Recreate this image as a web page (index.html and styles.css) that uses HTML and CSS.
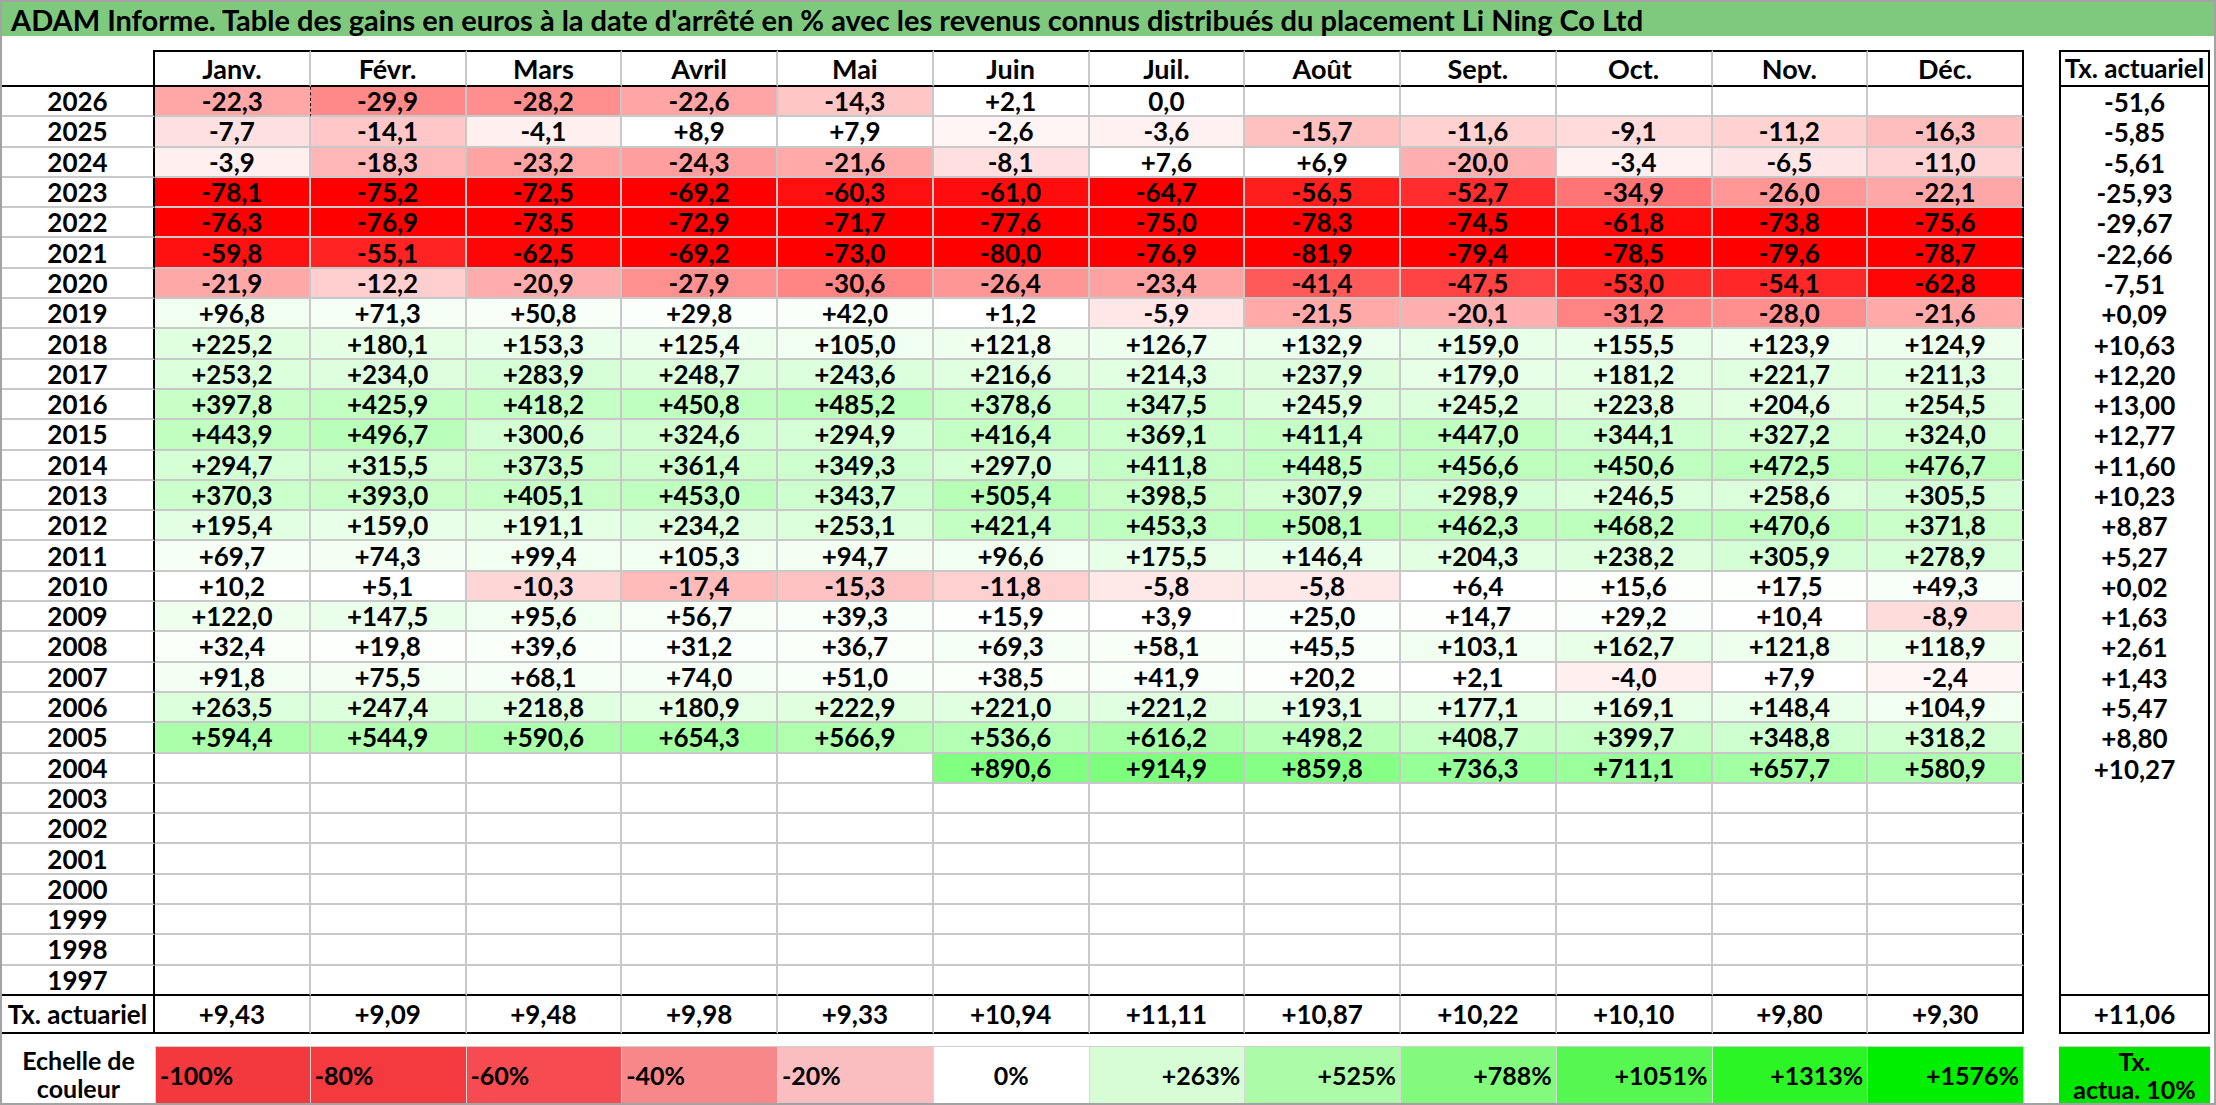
FILE: index.html
```html
<!DOCTYPE html>
<html lang="fr">
<head>
<meta charset="utf-8">
<title>ADAM Informe - Li Ning Co Ltd</title>
<link rel="stylesheet" href="styles.css">
</head>
<body>
<div class="sheet">
  <div class="title">ADAM Informe. Table des gains en euros à la date d'arrêté en % avec les revenus connus distribués du placement Li Ning Co Ltd</div>
  <div class="grid">
    <div class="row hdr"><div class="y"></div><div class="m">Janv.</div><div class="m">Févr.</div><div class="m">Mars</div><div class="m">Avril</div><div class="m">Mai</div><div class="m">Juin</div><div class="m">Juil.</div><div class="m">Août</div><div class="m">Sept.</div><div class="m">Oct.</div><div class="m">Nov.</div><div class="m">Déc.</div><div class="g"></div><div class="t">Tx. actuariel</div></div>
    <div class="row"><div class="y">2026</div><div class="c dash">-22,3</div><div class="c">-29,9</div><div class="c">-28,2</div><div class="c">-22,6</div><div class="c">-14,3</div><div class="c">+2,1</div><div class="c">0,0</div><div class="c"></div><div class="c"></div><div class="c"></div><div class="c"></div><div class="c"></div><div class="g"></div><div class="t">-51,6</div></div>
    <div class="row"><div class="y">2025</div><div class="c">-7,7</div><div class="c">-14,1</div><div class="c">-4,1</div><div class="c">+8,9</div><div class="c">+7,9</div><div class="c">-2,6</div><div class="c">-3,6</div><div class="c">-15,7</div><div class="c">-11,6</div><div class="c">-9,1</div><div class="c">-11,2</div><div class="c">-16,3</div><div class="g"></div><div class="t">-5,85</div></div>
    <div class="row"><div class="y">2024</div><div class="c">-3,9</div><div class="c">-18,3</div><div class="c">-23,2</div><div class="c">-24,3</div><div class="c">-21,6</div><div class="c">-8,1</div><div class="c">+7,6</div><div class="c">+6,9</div><div class="c">-20,0</div><div class="c">-3,4</div><div class="c">-6,5</div><div class="c">-11,0</div><div class="g"></div><div class="t">-5,61</div></div>
    <div class="row"><div class="y">2023</div><div class="c">-78,1</div><div class="c">-75,2</div><div class="c">-72,5</div><div class="c">-69,2</div><div class="c">-60,3</div><div class="c">-61,0</div><div class="c">-64,7</div><div class="c">-56,5</div><div class="c">-52,7</div><div class="c">-34,9</div><div class="c">-26,0</div><div class="c">-22,1</div><div class="g"></div><div class="t">-25,93</div></div>
    <div class="row"><div class="y">2022</div><div class="c">-76,3</div><div class="c">-76,9</div><div class="c">-73,5</div><div class="c">-72,9</div><div class="c">-71,7</div><div class="c">-77,6</div><div class="c">-75,0</div><div class="c">-78,3</div><div class="c">-74,5</div><div class="c">-61,8</div><div class="c">-73,8</div><div class="c">-75,6</div><div class="g"></div><div class="t">-29,67</div></div>
    <div class="row"><div class="y">2021</div><div class="c">-59,8</div><div class="c">-55,1</div><div class="c">-62,5</div><div class="c">-69,2</div><div class="c">-73,0</div><div class="c">-80,0</div><div class="c">-76,9</div><div class="c">-81,9</div><div class="c">-79,4</div><div class="c">-78,5</div><div class="c">-79,6</div><div class="c">-78,7</div><div class="g"></div><div class="t">-22,66</div></div>
    <div class="row"><div class="y">2020</div><div class="c">-21,9</div><div class="c">-12,2</div><div class="c">-20,9</div><div class="c">-27,9</div><div class="c">-30,6</div><div class="c">-26,4</div><div class="c">-23,4</div><div class="c">-41,4</div><div class="c">-47,5</div><div class="c">-53,0</div><div class="c">-54,1</div><div class="c">-62,8</div><div class="g"></div><div class="t">-7,51</div></div>
    <div class="row"><div class="y">2019</div><div class="c">+96,8</div><div class="c">+71,3</div><div class="c">+50,8</div><div class="c">+29,8</div><div class="c">+42,0</div><div class="c">+1,2</div><div class="c">-5,9</div><div class="c">-21,5</div><div class="c">-20,1</div><div class="c">-31,2</div><div class="c">-28,0</div><div class="c">-21,6</div><div class="g"></div><div class="t">+0,09</div></div>
    <div class="row"><div class="y">2018</div><div class="c">+225,2</div><div class="c">+180,1</div><div class="c">+153,3</div><div class="c">+125,4</div><div class="c">+105,0</div><div class="c">+121,8</div><div class="c">+126,7</div><div class="c">+132,9</div><div class="c">+159,0</div><div class="c">+155,5</div><div class="c">+123,9</div><div class="c">+124,9</div><div class="g"></div><div class="t">+10,63</div></div>
    <div class="row"><div class="y">2017</div><div class="c">+253,2</div><div class="c">+234,0</div><div class="c">+283,9</div><div class="c">+248,7</div><div class="c">+243,6</div><div class="c">+216,6</div><div class="c">+214,3</div><div class="c">+237,9</div><div class="c">+179,0</div><div class="c">+181,2</div><div class="c">+221,7</div><div class="c">+211,3</div><div class="g"></div><div class="t">+12,20</div></div>
    <div class="row"><div class="y">2016</div><div class="c">+397,8</div><div class="c">+425,9</div><div class="c">+418,2</div><div class="c">+450,8</div><div class="c">+485,2</div><div class="c">+378,6</div><div class="c">+347,5</div><div class="c">+245,9</div><div class="c">+245,2</div><div class="c">+223,8</div><div class="c">+204,6</div><div class="c">+254,5</div><div class="g"></div><div class="t">+13,00</div></div>
    <div class="row"><div class="y">2015</div><div class="c">+443,9</div><div class="c">+496,7</div><div class="c">+300,6</div><div class="c">+324,6</div><div class="c">+294,9</div><div class="c">+416,4</div><div class="c">+369,1</div><div class="c">+411,4</div><div class="c">+447,0</div><div class="c">+344,1</div><div class="c">+327,2</div><div class="c">+324,0</div><div class="g"></div><div class="t">+12,77</div></div>
    <div class="row"><div class="y">2014</div><div class="c">+294,7</div><div class="c">+315,5</div><div class="c">+373,5</div><div class="c">+361,4</div><div class="c">+349,3</div><div class="c">+297,0</div><div class="c">+411,8</div><div class="c">+448,5</div><div class="c">+456,6</div><div class="c">+450,6</div><div class="c">+472,5</div><div class="c">+476,7</div><div class="g"></div><div class="t">+11,60</div></div>
    <div class="row"><div class="y">2013</div><div class="c">+370,3</div><div class="c">+393,0</div><div class="c">+405,1</div><div class="c">+453,0</div><div class="c">+343,7</div><div class="c">+505,4</div><div class="c">+398,5</div><div class="c">+307,9</div><div class="c">+298,9</div><div class="c">+246,5</div><div class="c">+258,6</div><div class="c">+305,5</div><div class="g"></div><div class="t">+10,23</div></div>
    <div class="row"><div class="y">2012</div><div class="c">+195,4</div><div class="c">+159,0</div><div class="c">+191,1</div><div class="c">+234,2</div><div class="c">+253,1</div><div class="c">+421,4</div><div class="c">+453,3</div><div class="c">+508,1</div><div class="c">+462,3</div><div class="c">+468,2</div><div class="c">+470,6</div><div class="c">+371,8</div><div class="g"></div><div class="t">+8,87</div></div>
    <div class="row"><div class="y">2011</div><div class="c">+69,7</div><div class="c">+74,3</div><div class="c">+99,4</div><div class="c">+105,3</div><div class="c">+94,7</div><div class="c">+96,6</div><div class="c">+175,5</div><div class="c">+146,4</div><div class="c">+204,3</div><div class="c">+238,2</div><div class="c">+305,9</div><div class="c">+278,9</div><div class="g"></div><div class="t">+5,27</div></div>
    <div class="row"><div class="y">2010</div><div class="c">+10,2</div><div class="c">+5,1</div><div class="c">-10,3</div><div class="c">-17,4</div><div class="c">-15,3</div><div class="c">-11,8</div><div class="c">-5,8</div><div class="c">-5,8</div><div class="c">+6,4</div><div class="c">+15,6</div><div class="c">+17,5</div><div class="c">+49,3</div><div class="g"></div><div class="t">+0,02</div></div>
    <div class="row"><div class="y">2009</div><div class="c">+122,0</div><div class="c">+147,5</div><div class="c">+95,6</div><div class="c">+56,7</div><div class="c">+39,3</div><div class="c">+15,9</div><div class="c">+3,9</div><div class="c">+25,0</div><div class="c">+14,7</div><div class="c">+29,2</div><div class="c">+10,4</div><div class="c">-8,9</div><div class="g"></div><div class="t">+1,63</div></div>
    <div class="row"><div class="y">2008</div><div class="c">+32,4</div><div class="c">+19,8</div><div class="c">+39,6</div><div class="c">+31,2</div><div class="c">+36,7</div><div class="c">+69,3</div><div class="c">+58,1</div><div class="c">+45,5</div><div class="c">+103,1</div><div class="c">+162,7</div><div class="c">+121,8</div><div class="c">+118,9</div><div class="g"></div><div class="t">+2,61</div></div>
    <div class="row"><div class="y">2007</div><div class="c">+91,8</div><div class="c">+75,5</div><div class="c">+68,1</div><div class="c">+74,0</div><div class="c">+51,0</div><div class="c">+38,5</div><div class="c">+41,9</div><div class="c">+20,2</div><div class="c">+2,1</div><div class="c">-4,0</div><div class="c">+7,9</div><div class="c">-2,4</div><div class="g"></div><div class="t">+1,43</div></div>
    <div class="row"><div class="y">2006</div><div class="c">+263,5</div><div class="c">+247,4</div><div class="c">+218,8</div><div class="c">+180,9</div><div class="c">+222,9</div><div class="c">+221,0</div><div class="c">+221,2</div><div class="c">+193,1</div><div class="c">+177,1</div><div class="c">+169,1</div><div class="c">+148,4</div><div class="c">+104,9</div><div class="g"></div><div class="t">+5,47</div></div>
    <div class="row"><div class="y">2005</div><div class="c">+594,4</div><div class="c">+544,9</div><div class="c">+590,6</div><div class="c">+654,3</div><div class="c">+566,9</div><div class="c">+536,6</div><div class="c">+616,2</div><div class="c">+498,2</div><div class="c">+408,7</div><div class="c">+399,7</div><div class="c">+348,8</div><div class="c">+318,2</div><div class="g"></div><div class="t">+8,80</div></div>
    <div class="row"><div class="y">2004</div><div class="c"></div><div class="c"></div><div class="c"></div><div class="c"></div><div class="c"></div><div class="c">+890,6</div><div class="c">+914,9</div><div class="c">+859,8</div><div class="c">+736,3</div><div class="c">+711,1</div><div class="c">+657,7</div><div class="c">+580,9</div><div class="g"></div><div class="t">+10,27</div></div>
    <div class="row"><div class="y">2003</div><div class="c"></div><div class="c"></div><div class="c"></div><div class="c"></div><div class="c"></div><div class="c"></div><div class="c"></div><div class="c"></div><div class="c"></div><div class="c"></div><div class="c"></div><div class="c"></div><div class="g"></div><div class="t"></div></div>
    <div class="row"><div class="y">2002</div><div class="c"></div><div class="c"></div><div class="c"></div><div class="c"></div><div class="c"></div><div class="c"></div><div class="c"></div><div class="c"></div><div class="c"></div><div class="c"></div><div class="c"></div><div class="c"></div><div class="g"></div><div class="t"></div></div>
    <div class="row"><div class="y">2001</div><div class="c"></div><div class="c"></div><div class="c"></div><div class="c"></div><div class="c"></div><div class="c"></div><div class="c"></div><div class="c"></div><div class="c"></div><div class="c"></div><div class="c"></div><div class="c"></div><div class="g"></div><div class="t"></div></div>
    <div class="row"><div class="y">2000</div><div class="c"></div><div class="c"></div><div class="c"></div><div class="c"></div><div class="c"></div><div class="c"></div><div class="c"></div><div class="c"></div><div class="c"></div><div class="c"></div><div class="c"></div><div class="c"></div><div class="g"></div><div class="t"></div></div>
    <div class="row"><div class="y">1999</div><div class="c"></div><div class="c"></div><div class="c"></div><div class="c"></div><div class="c"></div><div class="c"></div><div class="c"></div><div class="c"></div><div class="c"></div><div class="c"></div><div class="c"></div><div class="c"></div><div class="g"></div><div class="t"></div></div>
    <div class="row"><div class="y">1998</div><div class="c"></div><div class="c"></div><div class="c"></div><div class="c"></div><div class="c"></div><div class="c"></div><div class="c"></div><div class="c"></div><div class="c"></div><div class="c"></div><div class="c"></div><div class="c"></div><div class="g"></div><div class="t"></div></div>
    <div class="row last"><div class="y">1997</div><div class="c"></div><div class="c"></div><div class="c"></div><div class="c"></div><div class="c"></div><div class="c"></div><div class="c"></div><div class="c"></div><div class="c"></div><div class="c"></div><div class="c"></div><div class="c"></div><div class="g"></div><div class="t"></div></div>
    <div class="row tot"><div class="y">Tx. actuariel</div><div class="s">+9,43</div><div class="s">+9,09</div><div class="s">+9,48</div><div class="s">+9,98</div><div class="s">+9,33</div><div class="s">+10,94</div><div class="s">+11,11</div><div class="s">+10,87</div><div class="s">+10,22</div><div class="s">+10,10</div><div class="s">+9,80</div><div class="s">+9,30</div><div class="g"></div><div class="t">+11,06</div></div>
  </div>
  <div class="legend">
    <div class="ly">Echelle de<br>couleur</div>
    <div class="lc l n100">-100%</div>
    <div class="lc l n80">-80%</div>
    <div class="lc l n60">-60%</div>
    <div class="lc l n40">-40%</div>
    <div class="lc l n20">-20%</div>
    <div class="lc ctr z0">0%</div>
    <div class="lc r p1">+263%</div>
    <div class="lc r p2">+525%</div>
    <div class="lc r p3">+788%</div>
    <div class="lc r p4">+1051%</div>
    <div class="lc r p5">+1313%</div>
    <div class="lc r p6">+1576%</div>
    <div class="lg"></div>
    <div class="ltx">Tx.<br>actua. 10%</div>
  </div>
</div>
<script src="app.js"></script>
</body>
</html>
```
FILE: styles.css
```css
* { box-sizing: border-box; }
html, body { margin: 0; padding: 0; background: #fff; }
body {
  font-family: Lato, "Open Sans", "Liberation Sans", sans-serif;
  font-weight: 700;
  color: #000;
}
.sheet {
  width: 2216px;
  height: 1105px;
  border: 2px solid #a3a3a3;
  overflow: hidden;
  background: #fff;
}
.title {
  height: 34px;
  background: #7fc97f;
  font-size: 29px;
  padding-left: 9px;
  display: flex;
  align-items: center;
  white-space: nowrap;
}
.grid {
  margin-top: 13.5px;
  padding-right: 4px;
}
.row, .legend {
  display: grid;
  grid-template-columns: 153px repeat(12, 1fr) 35px 151px;
}
.row { height: 30.3px; }
.row > div {
  display: flex;
  align-items: center;
  justify-content: center;
  font-size: 26px;
  line-height: 1;
  white-space: nowrap;
}
.y {
  border-right: 2px solid #000;
  border-bottom: 2px solid #c8c8c8;
}
.c, .s {
  border-right: 2px solid #c8c8c8;
  border-bottom: 2px solid #c8c8c8;
}
.row > div:nth-child(13) { border-right-color: #000; }
.c.dash { border-right: 1px dashed #000; }
.t {
  border-left: 2px solid #000;
  border-right: 2px solid #000;
}

.hdr { height: 37.5px; }
.hdr .y { border-bottom-color: #000; }
.hdr > .m { font-size: 27px; }
.m {
  border-top: 2px solid #000;
  border-bottom: 2px solid #000;
  border-right: 2px solid #c8c8c8;
}
.hdr .t { border: 2px solid #000; }

.last .y, .last .c { border-bottom-color: #000; }
.last .t { border-bottom: 2px solid #000; }

.tot { height: 38px; }
.tot .y, .tot .s { border-bottom-color: #000; }
.tot .t { border-bottom: 2px solid #000; }

.legend {
  margin-top: 12px;
  height: 57px;
  padding-right: 4px;
}
.legend > div {
  display: flex;
  align-items: center;
  font-size: 25px;
  line-height: 1.12;
  white-space: nowrap;
}
.lc { font-size: 26px; }
.ly {
  justify-content: center;
  text-align: center;
}
.lc {
  border-top: 1px solid #cfcfcf;
  border-right: 1px solid #d8d8d8;
}
.lc.l { justify-content: flex-start; padding-left: 4px; }
.lc.ctr { justify-content: center; }
.lc.r { justify-content: flex-end; padding-right: 4px; }
.n100 { background: #f3383e; border-left: 1px solid #d8d8d8; }
.n80 { background: #f4393f; }
.n60 { background: #f54b51; }
.n40 { background: #f88789; }
.n20 { background: #fbbec0; }
.z0 { background: #ffffff; }
.p1 { background: #d6fdd4; }
.p2 { background: #acfba8; }
.p3 { background: #82fa7d; }
.p4 { background: #55f850; }
.p5 { background: #2cf526; }
.p6 { background: #00ee00; }
.ltx {
  background: #00e600;
  justify-content: center;
  text-align: center;
  border-top: 1px solid #cfcfcf;
}
```
FILE: app.js
```js
document.querySelectorAll('.c').forEach(function (el) {
  var s = el.textContent.trim();
  if (!s) return;
  var v = parseFloat(s.replace(',', '.'));
  var t, k;
  if (v < 0) {
    t = Math.min(1, -v / 64);
    k = Math.round(255 * (1 - t));
    el.style.backgroundColor = 'rgb(255,' + k + ',' + k + ')';
  } else {
    t = Math.min(1, v / 1800);
    k = Math.round(255 * (1 - t));
    el.style.backgroundColor = 'rgb(' + k + ',255,' + k + ')';
  }
});
```
